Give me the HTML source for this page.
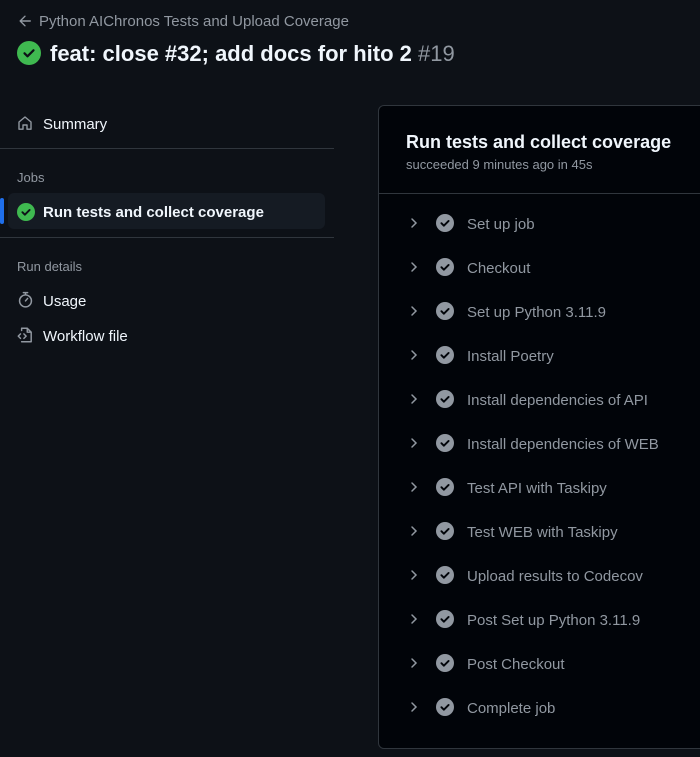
<!DOCTYPE html>
<html><head><style>
*{margin:0;padding:0;box-sizing:border-box}
body{width:700px;height:757px;background:#0d1117;font-family:"Liberation Sans",sans-serif;color:#f0f6fc;position:relative;overflow:hidden}
.a{position:absolute;white-space:nowrap}
.g{color:#9198a1}
.hr{position:absolute;left:0;width:334px;height:1px;background:#30363d}
.step{position:absolute;left:0;height:44px;width:322px}
.step svg{position:absolute}
.step span{position:absolute;left:89px;top:-8px;font-size:15px;color:#9198a1;line-height:20px}
</style></head><body>
<svg class="a" style="left:18px;top:14px" width="14" height="14" viewBox="0 0 16 16"><path d="M8 2.5 2.5 8 8 13.5M2.5 8H14" stroke="#9198a1" stroke-width="1.6" fill="none" stroke-linecap="round" stroke-linejoin="round"/></svg>
<div class="a g" style="left:39px;top:13px;font-size:15px;line-height:18px">Python AIChronos Tests and Upload Coverage</div>
<svg class="a" style="left:17px;top:41px" width="24" height="24" viewBox="0 0 24 24"><circle cx="12" cy="12" r="12" fill="#3fb950"/><path d="M7.5 12.3l3 3 6-6" stroke="#0d1117" stroke-width="2.2" fill="none" stroke-linecap="round" stroke-linejoin="round"/></svg>
<div class="a" style="left:50px;top:41px;font-size:22px;font-weight:bold;line-height:26px">feat: close #32; add docs for hito 2 <span class="g" style="font-weight:normal">#19</span></div>

<svg class="a" style="left:17px;top:115px" width="16" height="16" viewBox="0 0 16 16"><path d="M2 7 8 2l6 5v7.2H10V10H6v4.2H2Z" stroke="#9198a1" stroke-width="1.4" fill="none" stroke-linejoin="round"/></svg>
<div class="a" style="left:43px;top:116px;font-size:15px">Summary</div>
<div class="hr" style="top:148px"></div>
<div class="a g" style="left:17px;top:170px;font-size:13px">Jobs</div>
<div class="a" style="left:8px;top:193px;width:317px;height:36px;background:#151b23;border-radius:6px"></div>
<div class="a" style="left:0;top:198px;width:4px;height:26px;background:#1f6feb;border-radius:2px"></div>
<svg class="a" style="left:17px;top:203px" width="18" height="18" viewBox="0 0 16 16"><circle cx="8" cy="8" r="8" fill="#3fb950"/><path d="M4.8 8.2l2.2 2.2 4.2-4.2" stroke="#0d1117" stroke-width="1.7" fill="none" stroke-linecap="round" stroke-linejoin="round"/></svg>
<div class="a" style="left:43px;top:204px;font-size:15px;font-weight:bold">Run tests and collect coverage</div>
<div class="hr" style="top:237px"></div>
<div class="a g" style="left:17px;top:259px;font-size:13px">Run details</div>
<svg class="a" style="left:17px;top:291px" width="17" height="17" viewBox="0 0 16 16"><circle cx="8" cy="9.3" r="5.6" stroke="#9198a1" stroke-width="1.4" fill="none"/><path d="M6 1.5h4M8 1.5v2M8 9.3 10 7" stroke="#9198a1" stroke-width="1.4" stroke-linecap="round"/></svg>
<div class="a" style="left:43px;top:293px;font-size:15px">Usage</div>
<svg class="a" style="left:16px;top:326px" width="18" height="18" viewBox="0 0 16 16"><path d="M5 2h5l3.5 3.5V14H5M5 4V2M10 2v3.5h3.5M4 7 2 9l2 2M7 7l2 2-2 2" stroke="#9198a1" stroke-width="1.3" fill="none" stroke-linejoin="round" stroke-linecap="round"/></svg>
<div class="a" style="left:43px;top:328px;font-size:15px">Workflow file</div>

<div class="a" style="left:378px;top:105px;width:340px;height:644px;background:#010409;border:1px solid #30363d;border-radius:6px">
<div class="a" style="left:27px;top:26px;font-size:18px;font-weight:bold">Run tests and collect coverage</div>
<div class="a g" style="left:27px;top:51px;font-size:13px">succeeded 9 minutes ago in 45s</div>
<div class="a" style="left:0;top:87px;width:340px;height:1px;background:#30363d"></div>
</div>
<div class="a" style="left:378px;top:0">
<div class="step" style="top:223px"><svg style="left:30px;top:-6px" width="12" height="12" viewBox="0 0 12 12"><path d="M4 2l4 4-4 4" stroke="#9198a1" stroke-width="1.5" fill="none" stroke-linecap="round"/></svg><svg style="left:58px;top:-9px" width="18" height="18" viewBox="0 0 16 16"><circle cx="8" cy="8" r="8" fill="#9198a1"/><path d="M4.8 8.2l2.2 2.2 4.2-4.2" stroke="#010409" stroke-width="1.7" fill="none" stroke-linecap="round" stroke-linejoin="round"/></svg><span>Set up job</span></div>
<div class="step" style="top:267px"><svg style="left:30px;top:-6px" width="12" height="12" viewBox="0 0 12 12"><path d="M4 2l4 4-4 4" stroke="#9198a1" stroke-width="1.5" fill="none" stroke-linecap="round"/></svg><svg style="left:58px;top:-9px" width="18" height="18" viewBox="0 0 16 16"><circle cx="8" cy="8" r="8" fill="#9198a1"/><path d="M4.8 8.2l2.2 2.2 4.2-4.2" stroke="#010409" stroke-width="1.7" fill="none" stroke-linecap="round" stroke-linejoin="round"/></svg><span>Checkout</span></div>
<div class="step" style="top:311px"><svg style="left:30px;top:-6px" width="12" height="12" viewBox="0 0 12 12"><path d="M4 2l4 4-4 4" stroke="#9198a1" stroke-width="1.5" fill="none" stroke-linecap="round"/></svg><svg style="left:58px;top:-9px" width="18" height="18" viewBox="0 0 16 16"><circle cx="8" cy="8" r="8" fill="#9198a1"/><path d="M4.8 8.2l2.2 2.2 4.2-4.2" stroke="#010409" stroke-width="1.7" fill="none" stroke-linecap="round" stroke-linejoin="round"/></svg><span>Set up Python 3.11.9</span></div>
<div class="step" style="top:355px"><svg style="left:30px;top:-6px" width="12" height="12" viewBox="0 0 12 12"><path d="M4 2l4 4-4 4" stroke="#9198a1" stroke-width="1.5" fill="none" stroke-linecap="round"/></svg><svg style="left:58px;top:-9px" width="18" height="18" viewBox="0 0 16 16"><circle cx="8" cy="8" r="8" fill="#9198a1"/><path d="M4.8 8.2l2.2 2.2 4.2-4.2" stroke="#010409" stroke-width="1.7" fill="none" stroke-linecap="round" stroke-linejoin="round"/></svg><span>Install Poetry</span></div>
<div class="step" style="top:399px"><svg style="left:30px;top:-6px" width="12" height="12" viewBox="0 0 12 12"><path d="M4 2l4 4-4 4" stroke="#9198a1" stroke-width="1.5" fill="none" stroke-linecap="round"/></svg><svg style="left:58px;top:-9px" width="18" height="18" viewBox="0 0 16 16"><circle cx="8" cy="8" r="8" fill="#9198a1"/><path d="M4.8 8.2l2.2 2.2 4.2-4.2" stroke="#010409" stroke-width="1.7" fill="none" stroke-linecap="round" stroke-linejoin="round"/></svg><span>Install dependencies of API</span></div>
<div class="step" style="top:443px"><svg style="left:30px;top:-6px" width="12" height="12" viewBox="0 0 12 12"><path d="M4 2l4 4-4 4" stroke="#9198a1" stroke-width="1.5" fill="none" stroke-linecap="round"/></svg><svg style="left:58px;top:-9px" width="18" height="18" viewBox="0 0 16 16"><circle cx="8" cy="8" r="8" fill="#9198a1"/><path d="M4.8 8.2l2.2 2.2 4.2-4.2" stroke="#010409" stroke-width="1.7" fill="none" stroke-linecap="round" stroke-linejoin="round"/></svg><span>Install dependencies of WEB</span></div>
<div class="step" style="top:487px"><svg style="left:30px;top:-6px" width="12" height="12" viewBox="0 0 12 12"><path d="M4 2l4 4-4 4" stroke="#9198a1" stroke-width="1.5" fill="none" stroke-linecap="round"/></svg><svg style="left:58px;top:-9px" width="18" height="18" viewBox="0 0 16 16"><circle cx="8" cy="8" r="8" fill="#9198a1"/><path d="M4.8 8.2l2.2 2.2 4.2-4.2" stroke="#010409" stroke-width="1.7" fill="none" stroke-linecap="round" stroke-linejoin="round"/></svg><span>Test API with Taskipy</span></div>
<div class="step" style="top:531px"><svg style="left:30px;top:-6px" width="12" height="12" viewBox="0 0 12 12"><path d="M4 2l4 4-4 4" stroke="#9198a1" stroke-width="1.5" fill="none" stroke-linecap="round"/></svg><svg style="left:58px;top:-9px" width="18" height="18" viewBox="0 0 16 16"><circle cx="8" cy="8" r="8" fill="#9198a1"/><path d="M4.8 8.2l2.2 2.2 4.2-4.2" stroke="#010409" stroke-width="1.7" fill="none" stroke-linecap="round" stroke-linejoin="round"/></svg><span>Test WEB with Taskipy</span></div>
<div class="step" style="top:575px"><svg style="left:30px;top:-6px" width="12" height="12" viewBox="0 0 12 12"><path d="M4 2l4 4-4 4" stroke="#9198a1" stroke-width="1.5" fill="none" stroke-linecap="round"/></svg><svg style="left:58px;top:-9px" width="18" height="18" viewBox="0 0 16 16"><circle cx="8" cy="8" r="8" fill="#9198a1"/><path d="M4.8 8.2l2.2 2.2 4.2-4.2" stroke="#010409" stroke-width="1.7" fill="none" stroke-linecap="round" stroke-linejoin="round"/></svg><span>Upload results to Codecov</span></div>
<div class="step" style="top:619px"><svg style="left:30px;top:-6px" width="12" height="12" viewBox="0 0 12 12"><path d="M4 2l4 4-4 4" stroke="#9198a1" stroke-width="1.5" fill="none" stroke-linecap="round"/></svg><svg style="left:58px;top:-9px" width="18" height="18" viewBox="0 0 16 16"><circle cx="8" cy="8" r="8" fill="#9198a1"/><path d="M4.8 8.2l2.2 2.2 4.2-4.2" stroke="#010409" stroke-width="1.7" fill="none" stroke-linecap="round" stroke-linejoin="round"/></svg><span>Post Set up Python 3.11.9</span></div>
<div class="step" style="top:663px"><svg style="left:30px;top:-6px" width="12" height="12" viewBox="0 0 12 12"><path d="M4 2l4 4-4 4" stroke="#9198a1" stroke-width="1.5" fill="none" stroke-linecap="round"/></svg><svg style="left:58px;top:-9px" width="18" height="18" viewBox="0 0 16 16"><circle cx="8" cy="8" r="8" fill="#9198a1"/><path d="M4.8 8.2l2.2 2.2 4.2-4.2" stroke="#010409" stroke-width="1.7" fill="none" stroke-linecap="round" stroke-linejoin="round"/></svg><span>Post Checkout</span></div>
<div class="step" style="top:707px"><svg style="left:30px;top:-6px" width="12" height="12" viewBox="0 0 12 12"><path d="M4 2l4 4-4 4" stroke="#9198a1" stroke-width="1.5" fill="none" stroke-linecap="round"/></svg><svg style="left:58px;top:-9px" width="18" height="18" viewBox="0 0 16 16"><circle cx="8" cy="8" r="8" fill="#9198a1"/><path d="M4.8 8.2l2.2 2.2 4.2-4.2" stroke="#010409" stroke-width="1.7" fill="none" stroke-linecap="round" stroke-linejoin="round"/></svg><span>Complete job</span></div>
</div>
</body></html>
